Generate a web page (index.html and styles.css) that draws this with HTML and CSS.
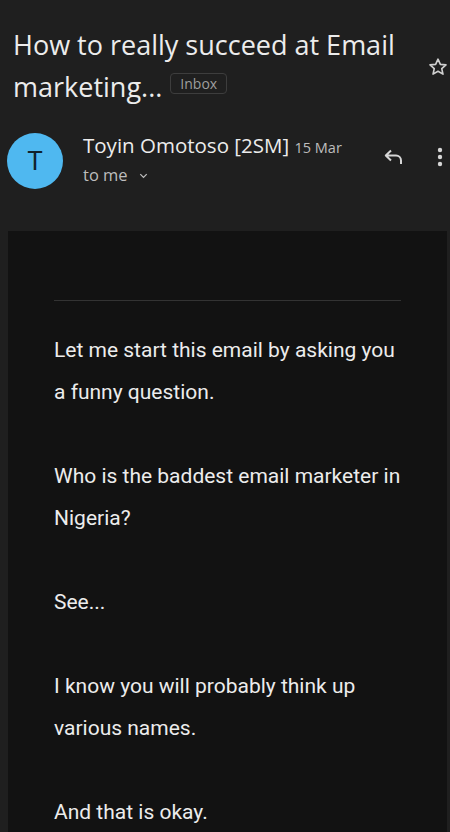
FILE: index.html
```html
<!DOCTYPE html>
<html lang="en">
<head>
    <meta charset="UTF-8">
    <meta name="viewport" content="width=device-width, initial-scale=1.0">
    <title>How to really succeed at Email marketing...</title>
    <link rel="stylesheet" href="styles.css">
</head>
<body>
    <div class="subject">
        <h1>How to really succeed at Email marketing... <span class="label">Inbox</span></h1>
        <svg class="star" viewBox="0 0 24 24" width="22" height="22">
            <path d="M12 3.5l2.6 5.6 6.1.6-4.6 4.1 1.3 6-5.4-3.1-5.4 3.1 1.3-6-4.6-4.1 6.1-.6z" fill="none" stroke="#cfcfcf" stroke-width="1.8" stroke-linejoin="round"/>
        </svg>
    </div>

    <div class="sender">
        <div class="avatar">T</div>
        <div class="sender-info">
            <div class="sender-name">Toyin Omotoso [2SM] <span class="date">15 Mar</span></div>
            <div class="recipient">to me
                <svg viewBox="0 0 12 12" width="11" height="11">
                    <path d="M2.5 4.5l3.5 3.5 3.5-3.5" fill="none" stroke="#bdbdbd" stroke-width="1.4"/>
                </svg>
            </div>
        </div>
        <div class="actions">
            <svg class="reply" viewBox="0 0 24 24" width="24" height="24">
                <path d="M9 5.5L3.8 10.5 9 15.5M4.5 10.5h9.5a5 5 0 0 1 5 5v3.5" fill="none" stroke="#d6d6d6" stroke-width="2" stroke-linejoin="round"/>
            </svg>
            <svg class="more" viewBox="0 0 8 24" width="8" height="24">
                <circle cx="4" cy="5" r="2.2" fill="#d6d6d6"/>
                <circle cx="4" cy="12" r="2.2" fill="#d6d6d6"/>
                <circle cx="4" cy="19" r="2.2" fill="#d6d6d6"/>
            </svg>
        </div>
    </div>

    <div class="message">
        <hr>
        <p>Let me start this email by asking you a funny question.</p>
        <p>Who is the baddest email marketer in Nigeria?</p>
        <p>See...</p>
        <p>I know you will probably think up various names.</p>
        <p>And that is okay.</p>
    </div>
</body>
</html>
```

FILE: styles.css
```css
body {
    margin: 0;
    padding: 0;
    background: #1f1f1f;
    color: #e8e8e8;
    font-family: 'Open Sans', sans-serif;
    width: 450px;
    height: 832px;
    overflow: hidden;
}
.subject {
    display: flex;
    align-items: flex-start;
    padding: 24px 0 0 13px;
}
.subject h1 {
    flex: 1;
    margin: 0;
    font-size: 27px;
    font-weight: 400;
    line-height: 42px;
    height: 84px;
    color: #ececec;
}
.label {
    display: inline-block;
    vertical-align: 8px;
    margin-left: 1px;
    padding: 0 9px;
    height: 21px;
    line-height: 19px;
    border: 1px solid #3d3d3d;
    border-radius: 4px;
    font-size: 14px;
    color: #9e9e9e;
    box-sizing: border-box;
}
.star {
    margin-top: 32px;
    flex-shrink: 0;
    margin-right: 1px;
}
.sender {
    display: flex;
    align-items: flex-start;
    padding: 25px 0 0 7px;
}
.avatar {
    width: 56px;
    height: 56px;
    border-radius: 50%;
    background: #4fb8f0;
    color: #10222c;
    font-family: 'Roboto', sans-serif;
    font-size: 26px;
    display: flex;
    justify-content: center;
    align-items: center;
    flex-shrink: 0;
}
.sender-info {
    flex: 1;
    margin-top: -2px;
    padding: 0 0 0 20px;
}
.sender-name {
    font-size: 20.5px;
    line-height: 28px;
    color: #ececec;
    white-space: nowrap;
}
.date {
    font-size: 14.5px;
    color: #bdbdbd;
}
.recipient {
    font-size: 16.5px;
    line-height: 26px;
    color: #bdbdbd;
}
.recipient svg {
    margin-left: 6px;
    vertical-align: 0;
}
.actions {
    display: flex;
    align-items: center;
    gap: 30px;
    padding-top: 12px;
    margin-right: 6px;
}
.message {
    margin: 42px 3px 0 8px;
    padding: 69px 46px 0 46px;
    background: #121212;
    font-family: 'Roboto', sans-serif;
    font-size: 21px;
    line-height: 42px;
    color: #ececec;
    min-height: 700px;
}
.message hr {
    margin: 0 0 28px 0;
    border: none;
    border-top: 1px solid #333333;
}
.message p {
    margin: 0 0 42px 0;
}
```
